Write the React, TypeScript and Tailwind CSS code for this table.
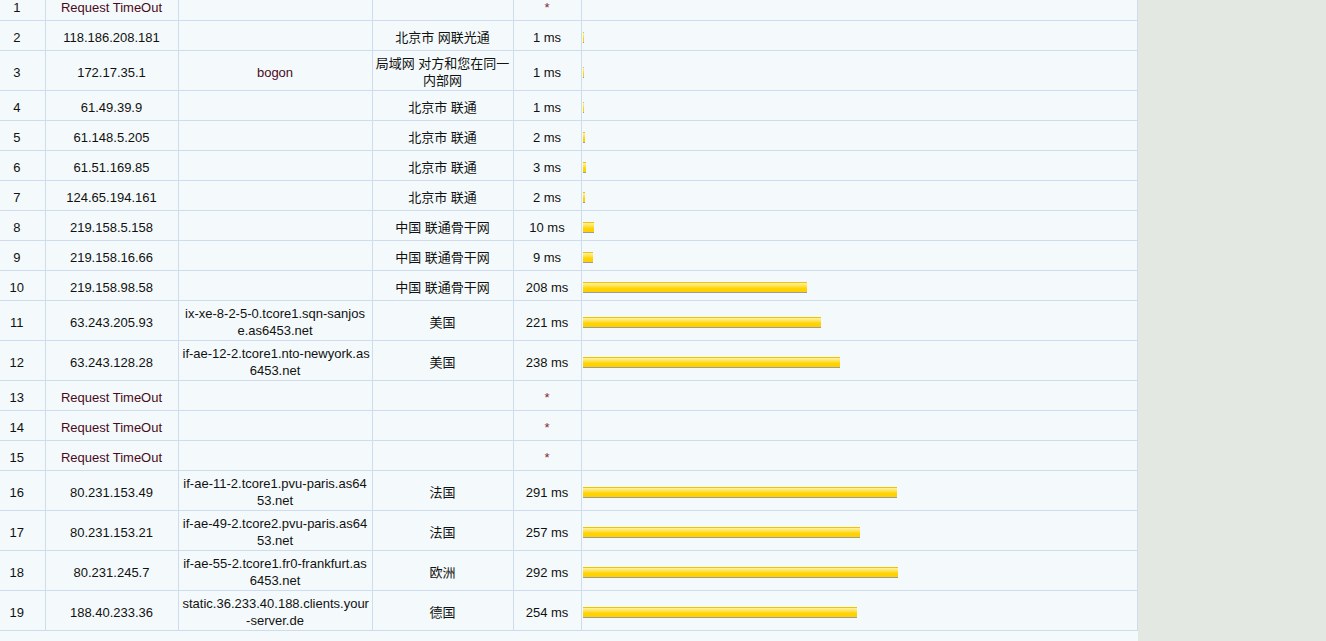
type Hop = {
  n: number
  ip: string
  host?: string[]
  loc?: string[]
  ms?: number
  hostDim?: boolean
}

const hops: Hop[] = [
  { n: 1, ip: 'Request TimeOut' },
  { n: 2, ip: '118.186.208.181', loc: ['北京市 网联光通'], ms: 1 },
  { n: 3, ip: '172.17.35.1', host: ['bogon'], hostDim: true, loc: ['局域网 对方和您在同一', '内部网'], ms: 1 },
  { n: 4, ip: '61.49.39.9', loc: ['北京市 联通'], ms: 1 },
  { n: 5, ip: '61.148.5.205', loc: ['北京市 联通'], ms: 2 },
  { n: 6, ip: '61.51.169.85', loc: ['北京市 联通'], ms: 3 },
  { n: 7, ip: '124.65.194.161', loc: ['北京市 联通'], ms: 2 },
  { n: 8, ip: '219.158.5.158', loc: ['中国 联通骨干网'], ms: 10 },
  { n: 9, ip: '219.158.16.66', loc: ['中国 联通骨干网'], ms: 9 },
  { n: 10, ip: '219.158.98.58', loc: ['中国 联通骨干网'], ms: 208 },
  { n: 11, ip: '63.243.205.93', host: ['ix-xe-8-2-5-0.tcore1.sqn-sanjos', 'e.as6453.net'], loc: ['美国'], ms: 221 },
  { n: 12, ip: '63.243.128.28', host: ['if-ae-12-2.tcore1.nto-newyork.as', '6453.net'], loc: ['美国'], ms: 238 },
  { n: 13, ip: 'Request TimeOut' },
  { n: 14, ip: 'Request TimeOut' },
  { n: 15, ip: 'Request TimeOut' },
  { n: 16, ip: '80.231.153.49', host: ['if-ae-11-2.tcore1.pvu-paris.as64', '53.net'], loc: ['法国'], ms: 291 },
  { n: 17, ip: '80.231.153.21', host: ['if-ae-49-2.tcore2.pvu-paris.as64', '53.net'], loc: ['法国'], ms: 257 },
  { n: 18, ip: '80.231.245.7', host: ['if-ae-55-2.tcore1.fr0-frankfurt.as', '6453.net'], loc: ['欧洲'], ms: 292 },
  { n: 19, ip: '188.40.233.36', host: ['static.36.233.40.188.clients.your', '-server.de'], loc: ['德国'], ms: 254 },
]

// longest hop gets 315px
const maxMs = 292
const barWidth = (ms: number) => Math.max(1, Math.round((ms * 315) / maxMs))

const td = 'border border-[#cfdcee] px-[4px] pt-[4px] pb-[1px] text-center align-middle leading-[17px]'

function Lines({ lines }: { lines?: string[] }) {
  if (!lines) return null
  return (
    <>
      {lines.map((l, i) => (
        <div key={i} className="whitespace-nowrap">
          {l}
        </div>
      ))}
    </>
  )
}

export default function App() {
  return (
    <div className="min-h-[641px] w-full bg-[#e4e8e2] overflow-hidden">
      <div className="w-[1138px] min-h-[641px] bg-[#f4fafb] overflow-hidden">
        <table
          className="-mt-[10px] w-[1138px] table-fixed border-collapse text-[13px] text-[#111]"
          style={{ fontFamily: '"Liberation Sans", "Noto Sans CJK SC", sans-serif' }}
        >
          <colgroup>
            <col className="w-[45px]" />
            <col className="w-[133px]" />
            <col className="w-[194px]" />
            <col className="w-[141px]" />
            <col className="w-[68px]" />
            <col />
          </colgroup>
          <tbody>
            {hops.map((h) => {
              const timeout = h.ms === undefined
              return (
                <tr key={h.n} className="h-[30px]">
                  <td className={`${td} border-l-0 !pl-0 !pr-[11px]`}>{h.n}</td>
                  <td className={`${td} ${timeout ? 'text-[#4a0a1c]' : ''}`}>{h.ip}</td>
                  <td className={`${td} ${h.hostDim ? 'text-[#4a0a1c]' : ''}`}>
                    <Lines lines={h.host} />
                  </td>
                  <td className={`${td} !px-0`}>
                    <Lines lines={h.loc} />
                  </td>
                  <td className={td}>
                    {timeout ? <span className="text-[#8a1c3c]">*</span> : `${h.ms} ms`}
                  </td>
                  <td className="border border-[#cfdcee] py-0 pl-[1px] pr-0 align-middle">
                    {!timeout && (
                      <div
                        className="mt-[3px] h-[11px] border-t border-t-[#f3c300] border-b border-b-[#9c9c9c] bg-[linear-gradient(to_bottom,#fff2a6,#ffe14d_35%,#ffd400_60%,#ffcf00)]"
                        style={{ width: barWidth(h.ms!) }}
                      />
                    )}
                  </td>
                </tr>
              )
            })}
          </tbody>
        </table>
      </div>
    </div>
  )
}
